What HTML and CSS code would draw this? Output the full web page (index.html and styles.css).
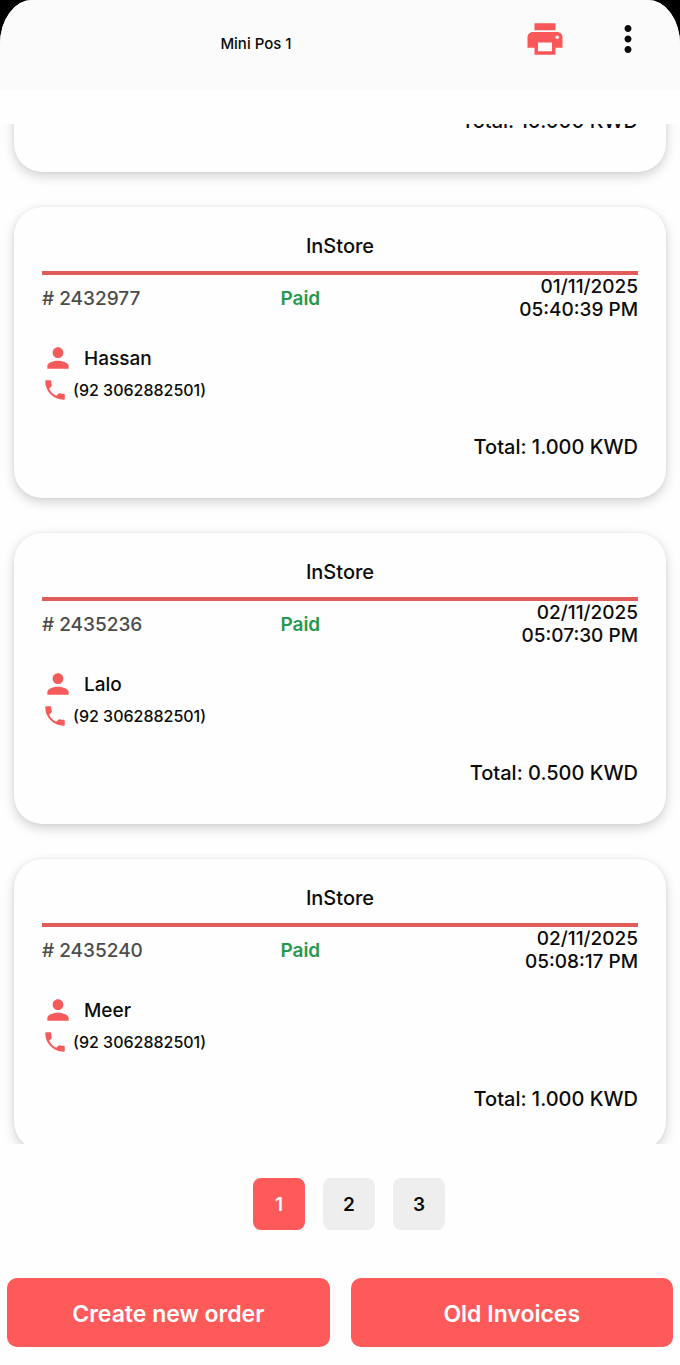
FILE: index.html
```html
<!DOCTYPE html>
<html lang="en">
<head>
    <meta charset="UTF-8">
    <meta name="viewport" content="width=device-width, initial-scale=1.0">
    <title>Mini Pos 1</title>
    <link rel="stylesheet" href="styles.css">
</head>
<body>

<!-- Shared icons -->
<svg class="icon-defs" aria-hidden="true">
    <symbol id="icon-person" viewBox="0 0 24 24">
        <path d="M12 12c2.21 0 4-1.79 4-4s-1.79-4-4-4-4 1.79-4 4 1.79 4 4 4zm0 2c-2.67 0-8 1.34-8 4v2h16v-2c0-2.66-5.33-4-8-4z"/>
    </symbol>
    <symbol id="icon-phone" viewBox="0 0 24 24">
        <path d="M6.62 10.79c1.44 2.83 3.76 5.14 6.59 6.59l2.2-2.2c.27-.27.67-.36 1.02-.24 1.12.37 2.33.57 3.57.57.55 0 1 .45 1 1V20c0 .55-.45 1-1 1-9.39 0-17-7.61-17-17 0-.55.45-1 1-1h3.5c.55 0 1 .45 1 1 0 1.25.2 2.45.57 3.57.11.35.03.74-.25 1.02l-2.2 2.2z"/>
    </symbol>
</svg>

<div class="app">
    <header class="app-header">
        <h1 class="app-title">Mini Pos 1</h1>
        <div class="header-actions">
            <button class="icon-button print-button" aria-label="Print">
                <svg viewBox="0 0 24 24">
                    <path d="M19 8H5c-1.66 0-3 1.34-3 3v6h4v4h12v-4h4v-6c0-1.66-1.34-3-3-3zm-3 11H8v-5h8v5zm3-7c-.55 0-1-.45-1-1s.45-1 1-1 1 .45 1 1-.45 1-1 1zm-1-9H6v4h12V3z"/>
                </svg>
            </button>
            <button class="icon-button" aria-label="More options">
                <svg viewBox="0 0 24 24">
                    <path d="M12 8c1.1 0 2-.9 2-2s-.9-2-2-2-2 .9-2 2 .9 2 2 2zm0 2c-1.1 0-2 .9-2 2s.9 2 2 2 2-.9 2-2-.9-2-2-2zm0 6c-1.1 0-2 .9-2 2s.9 2 2 2 2-.9 2-2-.9-2-2-2z"/>
                </svg>
            </button>
        </div>
    </header>

    <main class="order-list" id="order-list">
        <article class="order-card">
            <p class="order-total">Total: 10.000 KWD</p>
        </article>

        <article class="order-card">
            <h2 class="order-type">InStore</h2>
            <div class="order-info">
                <span class="order-id"># 2432977</span>
                <span class="order-status">Paid</span>
                <span class="order-date">01/11/2025<br>05:40:39 PM</span>
            </div>
            <div class="customer-name"><svg><use href="#icon-person"/></svg>Hassan</div>
            <div class="customer-phone"><svg><use href="#icon-phone"/></svg>(92 3062882501)</div>
            <p class="order-total">Total: 1.000 KWD</p>
        </article>

        <article class="order-card">
            <h2 class="order-type">InStore</h2>
            <div class="order-info">
                <span class="order-id"># 2435236</span>
                <span class="order-status">Paid</span>
                <span class="order-date">02/11/2025<br>05:07:30 PM</span>
            </div>
            <div class="customer-name"><svg><use href="#icon-person"/></svg>Lalo</div>
            <div class="customer-phone"><svg><use href="#icon-phone"/></svg>(92 3062882501)</div>
            <p class="order-total">Total: 0.500 KWD</p>
        </article>

        <article class="order-card">
            <h2 class="order-type">InStore</h2>
            <div class="order-info">
                <span class="order-id"># 2435240</span>
                <span class="order-status">Paid</span>
                <span class="order-date">02/11/2025<br>05:08:17 PM</span>
            </div>
            <div class="customer-name"><svg><use href="#icon-person"/></svg>Meer</div>
            <div class="customer-phone"><svg><use href="#icon-phone"/></svg>(92 3062882501)</div>
            <p class="order-total">Total: 1.000 KWD</p>
        </article>
    </main>

    <nav class="pagination" aria-label="Pages">
        <button class="page-button active" aria-current="page">1</button>
        <button class="page-button">2</button>
        <button class="page-button">3</button>
    </nav>

    <footer class="app-footer">
        <button class="action-button">Create new order</button>
        <button class="action-button">Old Invoices</button>
    </footer>
</div>

<script>
    document.getElementById('order-list').scrollTop = 243;
</script>

</body>
</html>
```

FILE: styles.css
```css
* {
    box-sizing: border-box;
}

body {
    margin: 0;
    background-color: #000;
    color: #0c0c0c;
    font-family: 'Inter', sans-serif;
    font-size: 19px;
    font-weight: 500;
    line-height: 23px;
}

h1, h2, p {
    margin: 0;
    font-size: inherit;
    font-weight: inherit;
}

button {
    padding: 0;
    border: none;
    color: inherit;
    font: inherit;
    cursor: pointer;
}

svg {
    display: block;
    fill: currentColor;
}

.icon-defs {
    display: none;
}

.app {
    display: flex;
    flex-direction: column;
    height: 100vh;
    background-color: #fefefe;
    border-radius: 32px 32px 0 0 / 44px 44px 0 0;
    overflow: hidden;
}

/* Header */
.app-header {
    display: flex;
    align-items: center;
    gap: 12px;
    height: 90px;
    padding: 0 31px 12px 0;
    background-color: #fbfbfb;
}

.app-title {
    flex: 1;
    padding-top: 8px;
    font-size: 15px;
    text-align: center;
}

.header-actions {
    display: flex;
    gap: 41px;
}

.icon-button {
    width: 42px;
    height: 42px;
    background: none;
}

.print-button {
    color: #f9585a;
}

/* Orders */
.order-list {
    flex: 1;
    min-height: 0;
    display: flex;
    flex-direction: column;
    gap: 35px;
    margin-top: 34px;
    padding: 0 14px 35px;
    overflow-y: auto;
    scrollbar-width: none;
}

.order-card {
    flex: none;
    display: flex;
    flex-direction: column;
    min-height: 291px;
    padding: 28px 28px 39px;
    background-color: #fefefe;
    border-radius: 28px;
    box-shadow: 0 4px 12px rgba(0, 0, 0, 0.18), 0 0 3px rgba(0, 0, 0, 0.06);
}

.order-type {
    padding-bottom: 13px;
    border-bottom: 4px solid #e25c5c;
    font-size: 20px;
    text-align: center;
}

.order-info {
    display: grid;
    grid-template-columns: 2fr 1fr 2fr;
    align-items: center;
    margin-bottom: 21px;
}

.order-id {
    color: #4c4c4c;
}

.order-status {
    color: #27994f;
    font-weight: 600;
}

.order-date {
    text-align: right;
}

.customer-name,
.customer-phone {
    display: flex;
    align-items: center;
}

.customer-name {
    gap: 10px;
    margin-bottom: 3px;
}

.customer-phone {
    gap: 5px;
    font-size: 16px;
}

.customer-name svg {
    width: 32px;
    height: 32px;
    color: #f55b5b;
}

.customer-phone svg {
    width: 26px;
    height: 26px;
    color: #f55b5b;
}

.order-total {
    margin-top: auto;
    font-size: 20px;
    text-align: right;
}

/* Pagination */
.pagination {
    display: flex;
    justify-content: center;
    padding: 34px 0 48px;
}

.page-button {
    width: 52px;
    height: 52px;
    margin-left: 18px;
    background-color: #eee;
    border-radius: 8px;
    font-weight: 600;
}

.page-button.active {
    background-color: #ff5a5a;
    color: #fff;
}

/* Bottom actions */
.app-footer {
    display: flex;
    gap: 21px;
    padding: 0 7px 18px;
}

.action-button {
    flex: 1;
    height: 69px;
    padding-top: 4px;
    background-color: #ff5a5a;
    border-radius: 10px;
    color: #fff;
    font-size: 23px;
    font-weight: 600;
}
```
